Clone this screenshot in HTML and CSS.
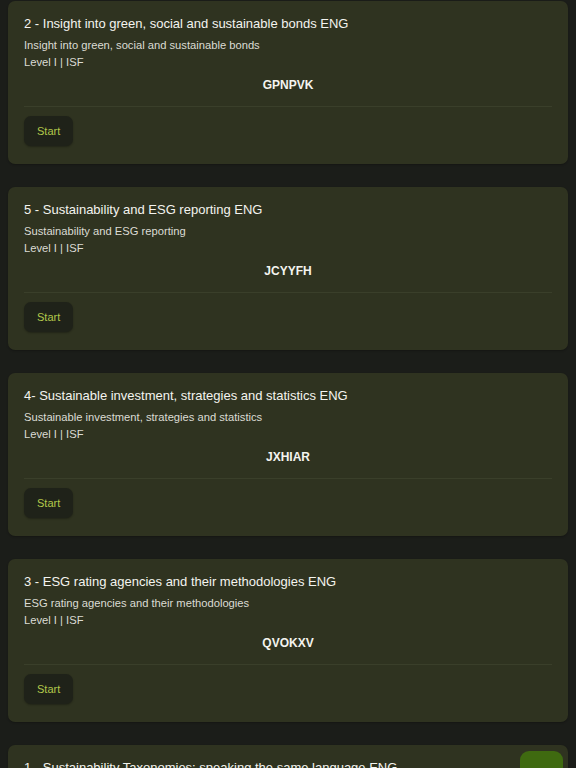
FILE: index.html
```html
<!DOCTYPE html>
<html lang="en">
<head>
<meta charset="utf-8">
<link rel="stylesheet" href="styles.css">
</head>
<body>
<main class="list">
  <section class="card">
    <h2 class="title">2 - Insight into green, social and sustainable bonds ENG</h2>
    <p class="sub">Insight into green, social and sustainable bonds</p>
    <p class="sub">Level I | ISF</p>
    <p class="code">GPNPVK</p>
    <div class="foot"><button class="start">Start</button></div>
  </section>
  <section class="card">
    <h2 class="title">5 - Sustainability and ESG reporting ENG</h2>
    <p class="sub">Sustainability and ESG reporting</p>
    <p class="sub">Level I | ISF</p>
    <p class="code">JCYYFH</p>
    <div class="foot"><button class="start">Start</button></div>
  </section>
  <section class="card">
    <h2 class="title">4- Sustainable investment, strategies and statistics ENG</h2>
    <p class="sub">Sustainable investment, strategies and statistics</p>
    <p class="sub">Level I | ISF</p>
    <p class="code">JXHIAR</p>
    <div class="foot"><button class="start">Start</button></div>
  </section>
  <section class="card">
    <h2 class="title">3 - ESG rating agencies and their methodologies ENG</h2>
    <p class="sub">ESG rating agencies and their methodologies</p>
    <p class="sub">Level I | ISF</p>
    <p class="code">QVOKXV</p>
    <div class="foot"><button class="start">Start</button></div>
  </section>
  <section class="card">
    <h2 class="title">1 - Sustainability Taxonomies: speaking the same language ENG</h2>
    <span class="badge">Cl</span>
    <p class="sub">Sustainability Taxonomies: speaking the same language</p>
    <p class="sub">Level I | ISF</p>
    <p class="code">ABCDEF</p>
    <div class="foot"><button class="start">Start</button></div>
  </section>
</main>
</body>
</html>
```
FILE: styles.css
```css
html, body {
  margin: 0;
  padding: 0;
  background: #1b1d19;
  height: 768px;
  overflow: hidden;
}
body {
  font-family: "Liberation Sans", Arial, sans-serif;
  color: #f1f1ec;
}
.list {
  display: flex;
  flex-direction: column;
  gap: 23px;
  padding: 1px 8px 0;
}
.card {
  position: relative;
  display: flex;
  flex-direction: column;
  background: #2f3320;
  border-radius: 7px;
  padding: 13px 16px 18px;
  box-shadow: 0 1px 2px rgba(0,0,0,0.25);
}
.title {
  margin: 0;
  font-size: 13px;
  font-weight: 400;
  line-height: 20px;
  color: #f4f4ef;
}
.sub {
  margin: 0;
  font-size: 11.2px;
  line-height: 17px;
  color: #dcdcd4;
}
.title + .sub { margin-top: 3px; }
.code {
  margin: 5px 0 0;
  text-align: center;
  font-size: 12px;
  font-weight: 700;
  line-height: 18px;
  color: #f4f4ef;
  padding-bottom: 12px;
  border-bottom: 1px solid #3a3f2a;
}
.foot {
  display: flex;
  padding-top: 9px;
}
.start {
  height: 30px;
  padding: 0 13px;
  border: none;
  border-radius: 7px;
  background: #1f2219;
  color: #b3c64a;
  font-family: "Liberation Sans", Arial, sans-serif;
  font-size: 11px;
  font-weight: 500;
  box-shadow: 0 1px 2px rgba(0,0,0,0.3);
}
.badge {
  position: absolute;
  top: 6px;
  right: 5px;
  width: 43px;
  height: 32px;
  border-radius: 9px;
  background: #3f6a10;
  color: #e8eed8;
  font-size: 11px;
  font-weight: 700;
  display: flex;
  align-items: center;
  justify-content: center;
  padding-top: 14px;
  box-sizing: border-box;
}
```
